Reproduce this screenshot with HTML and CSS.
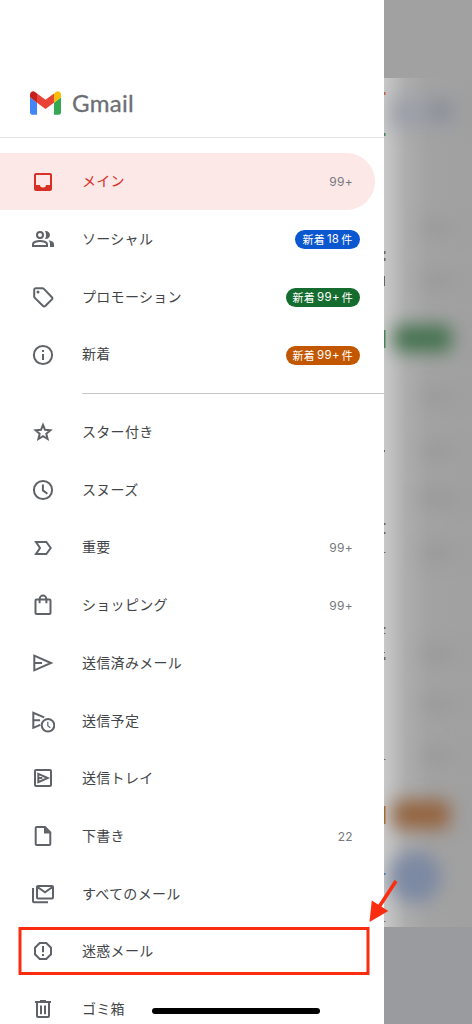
FILE: index.html
```html
<!DOCTYPE html>
<html lang="ja">
<head>
<meta charset="utf-8">
<title>Gmail</title>
<link rel="stylesheet" href="styles.css">
</head>
<body>
<div class="screen">
  <nav class="drawer">
    <header class="brand">
      <svg class="logo" viewBox="52 42 88 66"><path fill="#4285f4" d="M58 108h14V74L52 59v43c0 3.320 2.690 6 6 6"/><path fill="#34a853" d="M120 108h14c3.320 0 6-2.690 6-6V59l-20 15"/><path fill="#fbbc04" d="M120 48v26l20-15v-8c0-7.420-8.470-11.650-14.400-7.200"/><path fill="#ea4335" d="M72 74V48l24 18 24-18v26L96 92"/><path fill="#c5221f" d="M52 51v8l20 15V48l-5.600-4.200c-5.940-4.450-14.400-.22-14.400 7.200"/></svg>
      <span class="wordmark">Gmail</span>
    </header>
    <ul class="list primary">
      <li class="row active"><svg class="icon" viewBox="0 0 24 24"><path fill="currentColor" fill-rule="evenodd" d="M5 3h14a2 2 0 0 1 2 2v14a2 2 0 0 1-2 2H5a2 2 0 0 1-2-2V5a2 2 0 0 1 2-2zm0 2v10h4a3 2.500 0 0 0 6 0h4V5z"/></svg><span class="label">メイン</span><span class="count">99+</span></li>
      <li class="row"><svg class="icon" viewBox="0 0 24 24"><g fill="none" stroke="currentColor" stroke-width="2"><circle cx="9" cy="8" r="3"/><path d="M2 19v-2c0-2 4-3 7-3s7 1 7 3v2z"/></g><path fill="currentColor" d="M14 4.100c2.500-.5 5 1.300 5 3.900s-2.500 4.400-5 3.900c1.500-2.400 1.500-5.400 0-7.800zM17.500 13.200c3 .5 5.500 1.700 5.500 3.800v3h-4v-3c0-1.500-.5-2.800-1.500-3.800z"/></svg><span class="label">ソーシャル</span><span class="badge blue">新着<b>18</b>件</span></li>
      <li class="row"><svg class="icon" viewBox="0 0 24 24"><path class="line" d="M3.200 5v6.500c0 .6.200 1 .6 1.400l8.300 8.100c.7.700 1.500.7 2.200 0l6.600-6.600c.7-.7.7-1.500 0-2.200l-8-8.300c-.4-.4-.9-.7-1.500-.7H5c-1.200 0-1.800.6-1.800 1.800z"/><circle cx="7" cy="7" r="1.500" fill="currentColor"/></svg><span class="label">プロモーション</span><span class="badge green">新着<b>99+</b>件</span></li>
      <li class="row"><svg class="icon" viewBox="0 0 24 24"><circle class="line" cx="12" cy="12" r="9.100"/><path fill="currentColor" d="M11 7h2v2h-2zm0 4h2v6h-2z"/></svg><span class="label">新着</span><span class="badge orange">新着<b>99+</b>件</span></li>
    </ul>
    <div class="divider"></div>
    <ul class="list">
      <li class="row"><svg class="icon" viewBox="0 0 24 24"><path class="line" d="M12 4.900l2 4.900 5.400.5-4.100 3.500 1.300 5.200-4.600-2.800L7.400 19l1.300-5.200-4.100-3.500 5.400-.5z"/></svg><span class="label">スター付き</span></li>
      <li class="row"><svg class="icon" viewBox="0 0 24 24"><circle class="line" cx="12" cy="12" r="9.100"/><path class="line" d="M11.900 6.500v5.900l4.500 3.300"/></svg><span class="label">スヌーズ</span></li>
      <li class="row"><svg class="icon" viewBox="0 0 24 24"><path class="line" d="M5 6h10.300L19.700 12l-4.400 6H5l4-6z"/></svg><span class="label">重要</span><span class="count">99+</span></li>
      <li class="row"><svg class="icon" viewBox="0 0 24 24"><path class="line" d="M5.500 6.500h13c.6 0 1 .4 1 1V20c0 .6-.4 1-1 1h-13c-.6 0-1-.4-1-1V7.500c0-.6.400-1 1-1zM8.600 10.300V6a3.400 3.400 0 0 1 6.800 0v4.300"/></svg><span class="label">ショッピング</span><span class="count">99+</span></li>
      <li class="row"><svg class="icon" viewBox="0 0 24 24"><path class="line" d="M3.300 4.700 20 12 3.300 19.300zM3.300 12H11"/></svg><span class="label">送信済みメール</span></li>
      <li class="row"><svg class="icon" viewBox="0 0 24 24"><path class="line" d="M13.200 8.300 2.300 3.800v15l7-2.900M2.300 11.300H9"/><circle class="line" cx="17" cy="16.300" r="6.300"/><path class="line thin" d="M16.800 12.800v4l2.500 2"/></svg><span class="label">送信予定</span></li>
      <li class="row"><svg class="icon" viewBox="0 0 24 24"><rect class="line" x="4" y="4" width="16" height="16" rx="1"/><path class="line" d="M7.300 7.900 16.700 12l-9.400 4.100zM7.300 12h4"/></svg><span class="label">送信トレイ</span></li>
      <li class="row"><svg class="icon" viewBox="0 0 24 24"><path class="line" d="M6 3h8l5.300 5.300V20c0 .6-.4 1-1 1H5.700c-.6 0-1-.4-1-1V4c0-.6.4-1 1-1z"/><path fill="currentColor" d="M13 3v6.500h6.500z"/></svg><span class="label">下書き</span><span class="count">22</span></li>
      <li class="row"><svg class="icon" viewBox="0 0 24 24"><path class="line" d="M2 6v13.300c0 .7.300 1 1 1h14M7 4h14c.6 0 1 .4 1 1v10.500c0 .6-.4 1-1 1H7c-.6 0-1-.4-1-1V5c0-.6.4-1 1-1zM6.500 5 14 10.300 21.500 5"/></svg><span class="label">すべてのメール</span></li>
      <li class="row"><svg class="icon" viewBox="0 0 24 24"><path class="line" d="M8.700 4h6.600L20 8.700v6.600L15.300 20H8.700L4 15.300V8.700z"/><path fill="currentColor" d="M11 7h2v6.300h-2zm0 8h2v2h-2z"/></svg><span class="label">迷惑メール</span></li>
      <li class="row"><svg class="icon" viewBox="0 0 24 24"><path class="line" d="M4 5h16M9 4h6M6 5.500V19c0 .7.300 1 1 1h10c.7 0 1-.3 1-1V5.500M10 8.500v8.700M14 8.500v8.700"/></svg><span class="label">ゴミ箱</span></li>
    </ul>
  </nav>
  <svg class="backdrop" viewBox="384 0 88 1024">
    <defs>
      <linearGradient id="edge"><stop offset="0" stop-color="#c8c8c8"/><stop offset=".08" stop-color="#c0c0c0"/><stop offset=".25" stop-color="#adadad"/><stop offset=".5" stop-color="#a3a3a3"/><stop offset="1" stop-color="#a0a0a0"/></linearGradient>
      <filter id="soft" x="-60%" y="-100%" width="220%" height="300%" color-interpolation-filters="sRGB"><feGaussianBlur stdDeviation="9"/></filter>
      <clipPath id="pane"><rect x="384" y="78" width="88" height="849"/></clipPath>
    </defs>
    <rect x="384" width="88" height="78" fill="#a1a1a1"/>
    <rect x="384" y="78" width="88" height="849" fill="url(#edge)"/>
    <g clip-path="url(#pane)">
      <g filter="url(#soft)">
        <rect x="390" y="98" width="68" height="30" fill="#959ba6" opacity=".7"/>
        <circle cx="441" cy="110" r="10" fill="#83868d" opacity=".8"/>
        <rect x="394" y="325" width="58" height="27" rx="8" fill="#45724f"/>
        <rect x="393" y="800" width="57" height="29" rx="8" fill="#946440"/>
        <circle cx="415" cy="877" r="26" fill="#7484a2" opacity=".85"/>
      </g>
      <g filter="url(#soft)" fill="#929292" opacity=".5">
        <ellipse cx="437" cy="228" rx="17" ry="9"/><ellipse cx="437" cy="281" rx="17" ry="9"/><ellipse cx="437" cy="397" rx="17" ry="8"/><ellipse cx="437" cy="451" rx="17" ry="9"/><ellipse cx="437" cy="498" rx="20" ry="10"/><ellipse cx="437" cy="553" rx="17" ry="10"/><ellipse cx="437" cy="654" rx="17" ry="10"/><ellipse cx="437" cy="704" rx="17" ry="9"/><ellipse cx="437" cy="756" rx="17" ry="9"/>
      </g>
    </g>
    <rect x="384" y="927" width="88" height="97" fill="#9a9b9f"/>
    <g fill="#666"><path d="M384 251h1.500v3H384zM384 258h1.500v3H384zM384 276h1v10h-1zM384 450h1v2h-1zM384 523h1.500v2H384zM384 532h1.500v2H384zM384 552h1.500v1H384zM384 627h1.500v2H384zM384 633h1.500v1H384zM384 652h1v1h-1zM384 657h1.500v3H384zM384 759h1.500v1H384zM384 921h1.500v1H384z"/></g>
    <path fill="#c05b48" d="M384 92h1.500v3H384z"/><path fill="#46825a" d="M384 133h1.500v3H384zM384 330h1.500v18H384z"/><path fill="#a26b32" d="M384 806h1.500v18H384z"/><path fill="#5673a5" d="M384 873h1.500v2H384z"/>
  </svg>
  <svg class="annotation" viewBox="0 0 472 1024"><rect x="20" y="928.500" width="348" height="45" fill="none" stroke="#fb2c10" stroke-width="3"/><path d="M396 881 379 907" stroke="#fb2c10" stroke-width="3.600"/><path fill="#fb2c10" d="M369.500 922 371.800 900.500 388.300 911z"/></svg>
  <div class="home-indicator"></div>
</div>
</body>
</html>
```
FILE: styles.css
```css
* { box-sizing: border-box; }
body { margin: 0; background: #fff; font-family: "Inter", "Noto Sans CJK JP", sans-serif; }
.screen { position: relative; display: flex; width: 472px; height: 1024px; overflow: hidden; }
.drawer { width: 384px; flex: none; background: #fff; color: #5f6368; }
.backdrop { display: block; width: 88px; height: 1024px; flex: none; }
.brand { display: flex; align-items: center; gap: 11px; height: 138px; padding: 69px 0 0 30px; border-bottom: 1px solid #e4e5e7; margin-bottom: 14.700px; }
.logo { width: 31px; height: 24px; }
.wordmark { font: 24px/28px Lato, sans-serif; letter-spacing: .3px; color: #6b6f74; -webkit-text-stroke: .3px #6b6f74; }
.list { list-style: none; margin: 0; padding: 0; }
.row { display: flex; align-items: center; height: 57.700px; padding: 0 24px 0 31px; }
.active { width: 375px; padding-right: 22px; border-radius: 0 29px 29px 0; background: #fce8e7; color: #d93025; }
.icon { width: 24px; height: 24px; flex: none; }
.line { fill: none; stroke: currentColor; stroke-width: 2; }
.thin { stroke-width: 1.200; }
.label { flex: 1; margin-left: 27px; padding-bottom: 2.400px; font: 14px/20px "Noto Sans CJK JP", sans-serif; letter-spacing: .3px; color: #424548; }
.active .label { color: #d93025; }
.count { margin-right: 7px; font-size: 12px; letter-spacing: .3px; color: #75787d; }
.active .count { margin-right: 0; }
.badge { display: flex; align-items: center; gap: 2px; height: 19px; margin-top: 1px; padding: 0 7px; border-radius: 10px; color: #fff; font: 11px/19px "Noto Sans CJK JP", sans-serif; letter-spacing: .2px; }
.badge b { font: 400 11.500px/19px Inter, sans-serif; letter-spacing: .3px; }
.blue { padding: 0 7.500px; background: #0b57d0; }
.green { background: #146c2e; }
.orange { background: #c25700; }
.divider { height: 1px; margin: 10px 0 9px 82px; background: #c5c6c8; }
.annotation { position: absolute; inset: 0; width: 472px; height: 1024px; }
.home-indicator { position: absolute; left: 152px; top: 1008px; width: 168px; height: 6px; border-radius: 3px; background: #000; }
```
